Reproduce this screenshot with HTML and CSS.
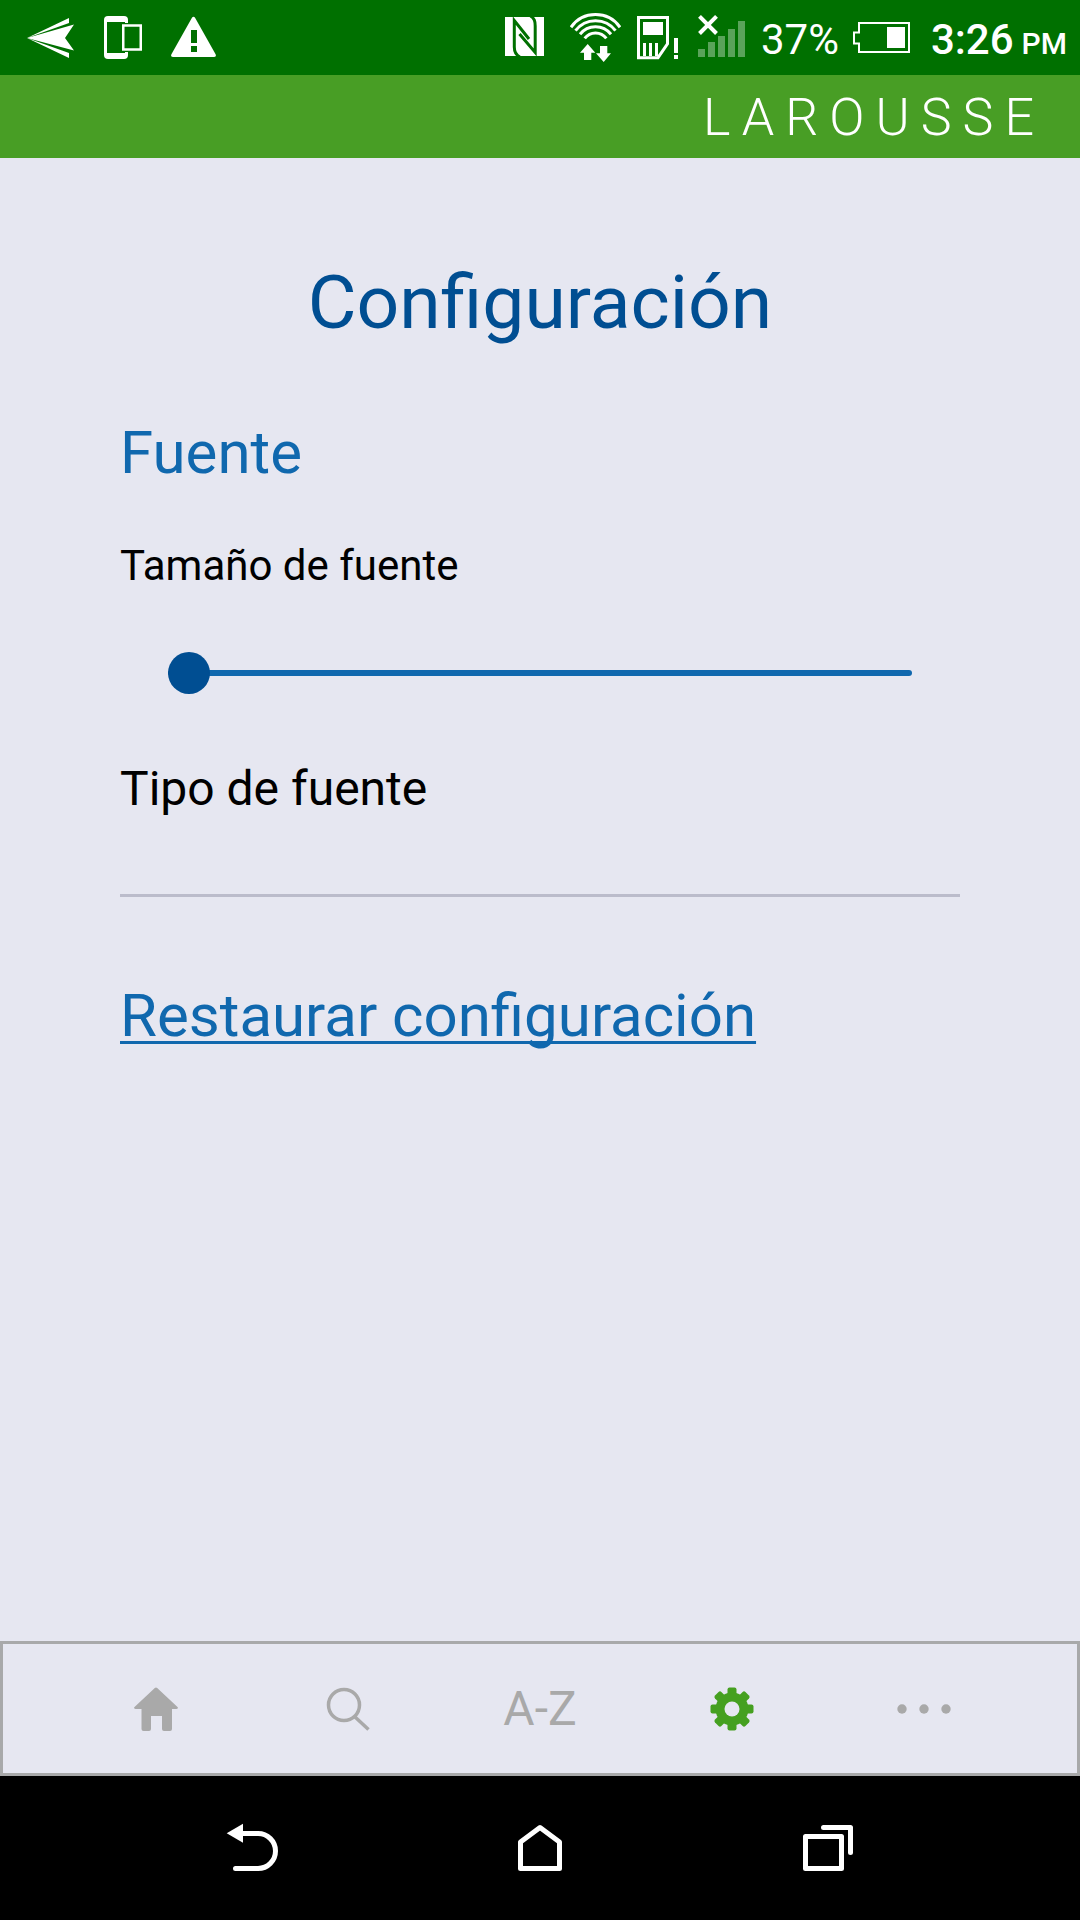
FILE: index.html
```
<!DOCTYPE html>
<html lang="es">
<head>
<meta charset="utf-8">
<meta name="viewport" content="width=device-width, initial-scale=1">
<title>Larousse - Configuración</title>
<link rel="stylesheet" href="styles.css">
</head>
<body>
<div class="status-bar">
  <div class="status-group notifications">
    <svg width="48" height="51" viewBox="0 0 48 51" fill="#fff" aria-hidden="true"><path d="M0 26 42 6v5L0 26l47-13.500L38 26l9 12.500L0 26l42 15v5Z"/></svg>
    <svg width="38" height="51" viewBox="0 0 38 51" aria-hidden="true"><rect y="4" width="24" height="43" rx="4" fill="#fff"/><path d="M3 10h18v31H3z" fill="#007000"/><path d="M17 11h8v29h-8z" fill="#007000"/><path d="M19.250 13.500h17.500v24H19.250z" fill="#007000" stroke="#fff" stroke-width="2.500"/></svg>
    <svg width="45" height="51" viewBox="0 0 45 51" aria-hidden="true"><path d="M20.800 6q1.700-2.500 3.400 0L44.700 42.500q.8 2.500-2 2.500H2.300q-2.800 0-2-2.500z" fill="#fff"/><path d="M20 18h6v13h-6zM20 34h6v6h-6z" fill="#007000"/></svg>
  </div>
  <div class="status-group">
    <svg width="49" height="51" viewBox="0 0 49 51" fill="none" aria-hidden="true"><path d="M0 5h39v39H0z" fill="#fff"/><path d="M15 45C10.500 43 9.300 40 9.300 35V8.500L24 27M25.500 4c4 2.500 4.700 5 4.700 10v26.500L14.500 22" stroke="#007000" stroke-width="3"/></svg>
    <svg width="51" height="51" viewBox="0 0 51 51" fill="none" aria-hidden="true"><path d="M1 15.300a30 30 0 0 1 49 0M5.500 18.700a25 25 0 0 1 40 0M10 22.300a19.700 19.700 0 0 1 31 0M14.700 26.300a13.500 13.500 0 0 1 21.600 0" stroke="#fff" stroke-width="3"/><path d="M17.700 32 25.300 40.700h-4V48H14v-7.300h-4zM33.700 50 41 41.300h-3.700V34H30v7.300h-4z" fill="#fff"/></svg>
    <svg width="45" height="51" viewBox="0 0 45 51" fill="none" aria-hidden="true"><path d="M1.500 5.500h29v26.300L21 45.700H1.500z" stroke="#fff" stroke-width="3"/><path d="M6 10h20v13H6zM6 31h3v13H6zM12 31h3v13h-3zM18 31h3v13h-3zM37 26h4v15h-4zM37 43h4v4h-4z" fill="#fff"/></svg>
    <svg width="47" height="51" viewBox="0 0 47 51" fill="none" aria-hidden="true"><path d="M0 37h7v8H0zM10 30h7v15h-7zM20 24h7v21h-7zM30 17h7v28h-7zM40 9h7v36h-7z" fill="#5aa35a"/><path d="m1.500 4.300 17 17.200m0-17.200-17 17.200" stroke="#fff" stroke-width="4"/></svg>
    <div class="battery">
      <span class="status-text">37%</span>
      <svg width="57" height="51" viewBox="0 0 57 51" fill="none" aria-hidden="true"><path d="M6 11h50v29H6v-8.500H1v-11h5z" stroke="#fff" stroke-width="2"/><path d="M34 15h18v21H34z" fill="#fff"/></svg>
    </div>
    <div class="clock status-text"><span>3:26</span><span class="meridiem">PM</span></div>
  </div>
</div>
<header class="brand-bar"><span class="brand">LAROUSSE</span></header>
<main class="settings">
  <h1 class="title">Configuración</h1>
  <h2 class="section-title">Fuente</h2>
  <label class="size-label" for="font-size">Tamaño de fuente</label>
  <div class="slider-row"><input class="slider" id="font-size" type="range" min="0" max="4" value="0"></div>
  <p class="type-label">Tipo de fuente</p>
  <hr class="divider">
  <a class="restore" href="#restaurar">Restaurar configuración</a>
</main>
<nav class="tab-bar" aria-label="Secciones">
  <a class="tab" href="#inicio" aria-label="Inicio"><svg width="44" height="44" viewBox="0 0 44 44" fill="currentColor" aria-hidden="true"><path d="M20.800 1q1.200-1 2.400 0L43.500 20q1.300 1.800-1 2H38v20q0 2-2 2h-6q-2 0-2-2V29H17v13q0 2-2 2H9.500q-2 0-2-2V22H1.500q-2.300-.2-1-2z"/></svg></a>
  <a class="tab" href="#buscar" aria-label="Buscar"><svg width="44" height="44" viewBox="0 0 44 44" fill="none" stroke="currentColor" stroke-width="3.500" aria-hidden="true"><circle cx="18" cy="18" r="15.500"/><path d="m28.500 29.500 14 13"/></svg></a>
  <a class="tab" href="#a-z">A-Z</a>
  <a class="tab active" href="#configuracion" aria-label="Configuración" aria-current="page"><svg width="44" height="44" viewBox="-22 -22 44 44" aria-hidden="true"><g fill="currentColor"><rect x="-4.500" y="-21.500" width="9" height="43" rx="2"/><rect x="-21.500" y="-4.500" width="43" height="9" rx="2"/><g transform="rotate(45)"><rect x="-4.500" y="-21.500" width="9" height="43" rx="2"/><rect x="-21.500" y="-4.500" width="43" height="9" rx="2"/></g><circle r="16.500"/></g><circle r="7.500" fill="#e6e7f1"/></svg></a>
  <a class="tab" href="#mas" aria-label="Más"><svg width="54" height="44" viewBox="0 0 54 44" fill="currentColor" aria-hidden="true"><circle cx="5" cy="22" r="4.700"/><circle cx="27" cy="22" r="4.700"/><circle cx="49" cy="22" r="4.700"/></svg></a>
</nav>
<div class="system-nav">
  <button class="system-button" type="button" aria-label="Atrás"><svg width="52" height="52" viewBox="0 0 52 52" fill="none" aria-hidden="true"><path d="M.7 11.300 17 1.700v19z" fill="#fff"/><path d="M16 11.500h16a17.500 17.500 0 0 1 0 35H9.500" stroke="#fff" stroke-width="5" stroke-linecap="round"/></svg></button>
  <button class="system-button" type="button" aria-label="Pantalla principal"><svg width="52" height="52" viewBox="0 0 52 52" fill="none" stroke="#fff" stroke-width="5" stroke-linejoin="round" aria-hidden="true"><path d="M26 5.500 45.500 20v26.500h-39V20z"/></svg></button>
  <button class="system-button" type="button" aria-label="Recientes"><svg width="52" height="52" viewBox="0 0 52 52" fill="none" stroke="#fff" stroke-width="5" stroke-linecap="round" stroke-linejoin="round" aria-hidden="true"><path d="M3.500 14.500h36v32h-36zM21.500 5.500h27v25"/></svg></button>
</div>
</body>
</html>
```
FILE: styles.css
```
* {
  box-sizing: border-box;
}

body {
  display: flex;
  flex-direction: column;
  min-height: 100vh;
  margin: 0;
  background: #e6e7f1;
  color: #000;
  font-family: Roboto, sans-serif;
}

svg {
  display: block;
  flex: none;
}

/* Status bar */
.status-bar {
  display: flex;
  align-items: center;
  justify-content: space-between;
  height: 75px;
  padding: 0 13px 0 27px;
  background: #007000;
  color: #fff;
  font-size: 42px;
  line-height: 50px;
}

.status-group {
  display: flex;
  align-items: center;
  gap: 16px;
}

.notifications {
  gap: 29px;
}

.status-text {
  padding-top: 4px;
}

.battery {
  display: flex;
  align-items: center;
  gap: 14px;
}

.clock {
  display: flex;
  align-items: baseline;
  gap: 8px;
  padding-left: 5px;
  font-weight: 500;
}

.meridiem {
  font-size: 30px;
  line-height: 36px;
}

/* Brand bar */
.brand-bar {
  display: flex;
  align-items: center;
  justify-content: flex-end;
  height: 83px;
  padding: 2px 35px 0 0;
  background: #489e25;
  color: #fff;
}

.brand {
  font-size: 52px;
  font-weight: 300;
  line-height: 60px;
  letter-spacing: 11px;
}

/* Settings */
.settings {
  flex: 1;
  padding: 100px 120px 40px;
}

.title {
  margin: 0 0 72px;
  color: #004e92;
  font-size: 75px;
  font-weight: 400;
  line-height: 88px;
  text-align: center;
}

.section-title {
  margin: 0 0 53px;
  color: #1068ae;
  font-size: 60px;
  font-weight: 400;
  line-height: 70px;
}

.size-label {
  display: block;
  font-size: 42px;
  line-height: 50px;
}

.slider-row {
  display: flex;
  padding: 61px 48px 67px;
}

.slider {
  width: 100%;
  height: 42px;
  margin: 0;
  background: transparent;
  appearance: none;
}

.slider::-webkit-slider-runnable-track {
  height: 6px;
  border-radius: 3px;
  background: #1068ae;
}

.slider::-webkit-slider-thumb {
  width: 42px;
  height: 42px;
  margin-top: -18px;
  border-radius: 50%;
  background: #004e92;
  appearance: none;
}

.type-label {
  margin: 0;
  font-size: 48px;
  line-height: 56px;
}

.divider {
  height: 3px;
  margin: 77px 0 84px;
  border: 0;
  background: #bbbccb;
}

.restore {
  display: block;
  color: #1068ae;
  font-size: 60px;
  line-height: 70px;
  text-decoration-thickness: 3px;
  text-decoration-skip-ink: none;
  text-underline-offset: 5px;
}

/* Tab bar */
.tab-bar {
  display: flex;
  height: 135px;
  padding: 0 57px;
  border: 3px solid #a8a9aa;
}

.tab {
  display: flex;
  flex: 1;
  align-items: center;
  justify-content: center;
  color: #a9a9a9;
  font-size: 48px;
  line-height: 56px;
  text-decoration: none;
}

.tab.active {
  color: #45a020;
}

/* System navigation */
.system-nav {
  display: flex;
  height: 144px;
  padding: 0 10%;
  background: #000;
}

.system-button {
  display: flex;
  flex: 1;
  align-items: center;
  justify-content: center;
  padding: 0;
  border: 0;
  background: none;
}
```
